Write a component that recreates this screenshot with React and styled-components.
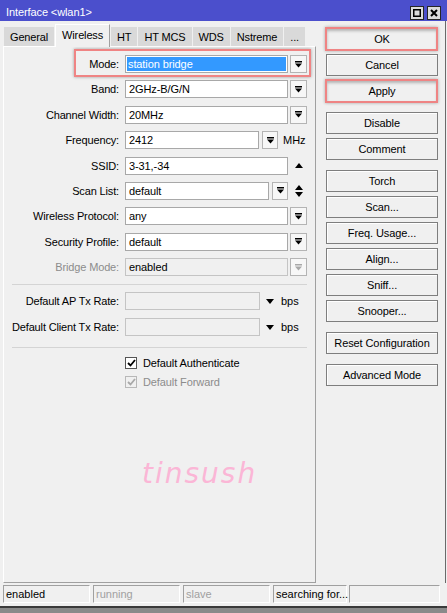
import React from 'react';
import styled, { createGlobalStyle, css } from 'styled-components';

const GlobalStyle = createGlobalStyle`
  html, body { margin: 0; padding: 0; background: #f0f0f0; }
  body {
    font-family: "Liberation Sans", Arial, sans-serif;
    font-size: 11px;
    color: #000;
  }
`;

const Window = styled.div`
  width: 447px;
  height: 613px;
  display: flex;
  flex-direction: column;
  background: #f0f0f0;
  overflow: hidden;
`;

const TitleBar = styled.div`
  height: 21px;
  flex: none;
  background: #4b4fcc;
  color: #fff;
  display: flex;
  align-items: flex-end;
  padding: 0 6px 1px 6px;
  box-sizing: border-box;
`;

const Title = styled.span`
  flex: 1;
  line-height: 13px;
  padding-bottom: 1px;
  letter-spacing: -0.1px;
`;

const TitleButtons = styled.div`
  display: flex;
  gap: 3px;
`;

const TitleButton = styled.div`
  width: 14px;
  height: 14px;
  box-sizing: border-box;
  border: 1px solid #262626;
  background: #dcdcdc;
  display: flex;
  align-items: center;
  justify-content: center;
`;

const Body = styled.div`
  flex: 1;
  display: flex;
  min-height: 0;
  border-right: 1px solid #6a6a6a;
  margin-right: 1px;
`;

const LeftCol = styled.div`
  width: 313px;
  margin-left: 3px;
  padding-top: 3px;
  display: flex;
  flex-direction: column;
`;

const TabsRow = styled.div`
  height: 22px;
  flex: none;
  display: flex;
  align-items: flex-end;
  gap: 1px;
  padding-left: 1px;
  position: relative;
  z-index: 1;
`;

const Tab = styled.div`
  height: 19px;
  padding: 0 6px;
  display: flex;
  align-items: center;
  box-sizing: border-box;
  background: #d9d9d9;
  letter-spacing: -0.15px;
  white-space: nowrap;
  ${p => p.$active && css`
    height: 23px;
    margin-bottom: -1px;
    background: #f0f0f0;
    border-top: 1px solid #fff;
    border-left: 1px solid #fff;
    border-right: 1px solid #a0a0a0;
    padding-bottom: 3px;
  `}
`;

const Panel = styled.div`
  flex: 1;
  box-sizing: border-box;
  border-top: 1px solid #fff;
  border-left: 1px solid #fff;
  border-right: 1px solid #a0a0a0;
  border-bottom: 1px solid #a0a0a0;
  padding-top: 8px;
  display: flex;
  flex-direction: column;
`;

const FieldGroup = styled.div`
  display: flex;
  flex-direction: column;
  gap: ${p => p.$gap}px;
  margin-top: ${p => p.$top || 0}px;
`;

const Row = styled.div`
  height: 18px;
  display: flex;
  align-items: center;
  position: relative;
  ${p => p.$marked && css`
    &::after {
      content: '';
      position: absolute;
      left: 70px;
      right: 4px;
      top: -6px;
      bottom: -4px;
      border: 2px solid #ef8484;
      box-shadow: 0 0 3px rgba(0, 0, 0, 0.35);
      pointer-events: none;
    }
  `}
`;

const Label = styled.div`
  width: 115px;
  flex: none;
  margin-right: 6px;
  text-align: right;
  white-space: nowrap;
  letter-spacing: -0.15px;
  color: ${p => (p.$disabled ? '#8c8c8c' : '#000')};
`;

const Field = styled.div`
  width: ${p => p.$w}px;
  height: 18px;
  flex: none;
  box-sizing: border-box;
  border: 1px solid #a8a8a8;
  background: #fff;
  padding-left: 3px;
  display: flex;
  align-items: center;
  white-space: nowrap;
  letter-spacing: -0.1px;
  ${p => p.$disabled && css`
    background: #f0f0f0;
    border-color: #c4c4c4;
  `}
  ${p => p.$selected && css`
    background: #3399ff;
    color: #fff;
    box-shadow: inset 0 0 0 1px #fff;
    padding-left: 2px;
  `}
`;

const DropButton = styled.div`
  width: ${p => p.$w || 17}px;
  height: 18px;
  flex: none;
  margin-left: ${p => p.$ml || 2}px;
  box-sizing: border-box;
  border: 1px solid #b4b4b4;
  background: #f7f7f7;
  display: flex;
  align-items: center;
  justify-content: center;
`;

const Glyph = styled.div`
  flex: none;
  margin-left: ${p => p.$ml}px;
  display: flex;
  align-items: center;
`;

const Unit = styled.span`
  margin-left: ${p => p.$ml}px;
  white-space: nowrap;
`;

const Separator = styled.div`
  height: 1px;
  flex: none;
  background: #d4d4d4;
  margin: ${p => p.$top}px 8px 0 8px;
`;

const CheckGroup = styled.div`
  display: flex;
  flex-direction: column;
  gap: 6px;
  margin-top: 8px;
  padding-left: 121px;
`;

const CheckRow = styled.label`
  display: flex;
  align-items: center;
  gap: 6px;
  height: 13px;
  color: ${p => (p.$disabled ? '#8c8c8c' : '#000')};
  letter-spacing: -0.1px;
`;

const Box = styled.span`
  width: 12px;
  height: 12px;
  box-sizing: border-box;
  border: 1px solid ${p => (p.$disabled ? '#b8b8b8' : '#555')};
  background: ${p => (p.$disabled ? '#f0f0f0' : '#fff')};
  display: flex;
  align-items: center;
  justify-content: center;
`;

const Watermark = styled.div`
  margin: 69px 0 0 138px;
  font-family: "DejaVu Sans", sans-serif;
  font-size: 28px;
  line-height: 34px;
  font-weight: 200;
  font-style: italic;
  letter-spacing: 2px;
  color: #fbb6d6;
`;

const RightCol = styled.div`
  padding: 7px 0 0 10px;
  width: 112px;
  display: flex;
  flex-direction: column;
`;

const ButtonGroup = styled.div`
  display: flex;
  flex-direction: column;
  gap: 4px;
  margin-top: ${p => p.$top || 0}px;
`;

const Button = styled.div`
  height: 22px;
  box-sizing: border-box;
  border: 1px solid #7e7e7e;
  background: #f0f0f0;
  box-shadow: inset 1px 1px 0 #fff;
  display: flex;
  align-items: center;
  justify-content: center;
  position: relative;
  letter-spacing: -0.1px;
  ${p => p.$marked && css`
    box-shadow: inset 0 2px 3px rgba(0, 0, 0, 0.25);
    &::after {
      content: '';
      position: absolute;
      inset: -2px -1px -2px -2px;
      border: 2px solid #ef8484;
      box-shadow: 0 0 3px rgba(0, 0, 0, 0.3);
      pointer-events: none;
    }
  `}
`;

const StatusBar = styled.div`
  height: 23px;
  flex: none;
  display: flex;
  gap: 3px;
  padding: 2px 0 0 3px;
  box-sizing: border-box;
`;

const Cell = styled.div`
  width: ${p => p.$w}px;
  height: 18px;
  box-sizing: border-box;
  border-top: 1px solid #a0a0a0;
  border-left: 1px solid #a0a0a0;
  border-right: 1px solid #fff;
  border-bottom: 1px solid #fff;
  padding-left: 2px;
  display: flex;
  align-items: center;
  white-space: nowrap;
  margin-right: ${p => p.$mr || 0}px;
  color: ${p => (p.$dim ? '#a0a0a0' : '#000')};
`;

const BottomFrame = styled.div`
  height: 7px;
  flex: none;
  box-sizing: border-box;
  border-top: 2px solid #3a3a3a;
  background: #8a8a8a;
`;

const DropIcon = ({ disabled }) => (
  <svg width="7" height="7" viewBox="0 0 7 7">
    <g fill={disabled ? '#a8a8a8' : '#000'}>
      <rect x="0" y="0" width="7" height="1.5" />
      <path d="M0 2.5 H7 L3.5 6.5 Z" />
    </g>
  </svg>
);

const UpIcon = () => (
  <svg width="8" height="5" viewBox="0 0 8 5">
    <path d="M0 5 L4 0 L8 5 Z" fill="#000" />
  </svg>
);

const DownIcon = () => (
  <svg width="8" height="5" viewBox="0 0 8 5">
    <path d="M0 0 L8 0 L4 5 Z" fill="#000" />
  </svg>
);

const UpDownIcon = () => (
  <svg width="8" height="12" viewBox="0 0 8 12">
    <path d="M0 5 L4 0 L8 5 Z M0 7 L8 7 L4 12 Z" fill="#000" />
  </svg>
);

const CheckMark = ({ disabled }) => (
  <svg width="9" height="8" viewBox="0 0 9 8">
    <path d="M1 4 L3.5 6.5 L8 1" stroke={disabled ? '#a8a8a8' : '#000'} strokeWidth="1.8" fill="none" />
  </svg>
);

const tabs = ['General', 'Wireless', 'HT', 'HT MCS', 'WDS', 'Nstreme', '...'];

const buttonGroups = [
  { top: 0, items: [['OK', true], ['Cancel'], ['Apply', true]] },
  { top: 10, items: [['Disable'], ['Comment']] },
  { top: 10, items: [['Torch'], ['Scan...'], ['Freq. Usage...'], ['Align...'], ['Sniff...'], ['Snooper...']] },
  { top: 10, items: [['Reset Configuration']] },
  { top: 10, items: [['Advanced Mode']] },
];

const App = () => (
  <Window>
    <GlobalStyle />
    <TitleBar>
      <Title>Interface &lt;wlan1&gt;</Title>
      <TitleButtons>
        <TitleButton>
          <svg width="8" height="8" viewBox="0 0 8 8">
            <rect x="0.75" y="0.75" width="6.5" height="6.5" fill="none" stroke="#000" strokeWidth="1.5" />
          </svg>
        </TitleButton>
        <TitleButton>
          <svg width="8" height="8" viewBox="0 0 8 8">
            <path d="M1 1 L7 7 M7 1 L1 7" stroke="#000" strokeWidth="2" />
          </svg>
        </TitleButton>
      </TitleButtons>
    </TitleBar>

    <Body>
      <LeftCol>
        <TabsRow>
          {tabs.map(t => (
            <Tab key={t} $active={t === 'Wireless'}>{t}</Tab>
          ))}
        </TabsRow>
        <Panel>
          <FieldGroup $gap={7.4}>
            <Row $marked>
              <Label>Mode:</Label>
              <Field $w={163} $selected>station bridge</Field>
              <DropButton><DropIcon /></DropButton>
            </Row>
            <Row>
              <Label>Band:</Label>
              <Field $w={163}>2GHz-B/G/N</Field>
              <DropButton><DropIcon /></DropButton>
            </Row>
            <Row>
              <Label>Channel Width:</Label>
              <Field $w={163}>20MHz</Field>
              <DropButton><DropIcon /></DropButton>
            </Row>
            <Row>
              <Label>Frequency:</Label>
              <Field $w={134}>2412</Field>
              <DropButton $ml={3} $w={16}><DropIcon /></DropButton>
              <Unit $ml={5}>MHz</Unit>
            </Row>
            <Row>
              <Label>SSID:</Label>
              <Field $w={163}>3-31,-34</Field>
              <Glyph $ml={7}><UpIcon /></Glyph>
            </Row>
            <Row>
              <Label>Scan List:</Label>
              <Field $w={144}>default</Field>
              <DropButton $ml={3} $w={16}><DropIcon /></DropButton>
              <Glyph $ml={7}><UpDownIcon /></Glyph>
            </Row>
            <Row>
              <Label>Wireless Protocol:</Label>
              <Field $w={163}>any</Field>
              <DropButton><DropIcon /></DropButton>
            </Row>
            <Row>
              <Label>Security Profile:</Label>
              <Field $w={163}>default</Field>
              <DropButton><DropIcon /></DropButton>
            </Row>
            <Row>
              <Label $disabled>Bridge Mode:</Label>
              <Field $w={163} $disabled>enabled</Field>
              <DropButton><DropIcon disabled /></DropButton>
            </Row>
          </FieldGroup>

          <Separator $top={8} />

          <FieldGroup $gap={8} $top={7}>
            <Row>
              <Label>Default AP Tx Rate:</Label>
              <Field $w={135} $disabled />
              <Glyph $ml={6}><DownIcon /></Glyph>
              <Unit $ml={7}>bps</Unit>
            </Row>
            <Row>
              <Label>Default Client Tx Rate:</Label>
              <Field $w={135} $disabled />
              <Glyph $ml={6}><DownIcon /></Glyph>
              <Unit $ml={7}>bps</Unit>
            </Row>
          </FieldGroup>

          <Separator $top={11} />

          <CheckGroup>
            <CheckRow>
              <Box><CheckMark /></Box>
              Default Authenticate
            </CheckRow>
            <CheckRow $disabled>
              <Box $disabled><CheckMark disabled /></Box>
              Default Forward
            </CheckRow>
          </CheckGroup>

          <Watermark>tinsush</Watermark>
        </Panel>
      </LeftCol>

      <RightCol>
        {buttonGroups.map((g, i) => (
          <ButtonGroup key={i} $top={g.top}>
            {g.items.map(([label, marked]) => (
              <Button key={label} $marked={marked}>{label}</Button>
            ))}
          </ButtonGroup>
        ))}
      </RightCol>
    </Body>

    <StatusBar>
      <Cell $w={87}>enabled</Cell>
      <Cell $w={87} $dim>running</Cell>
      <Cell $w={87} $dim>slave</Cell>
      <Cell $w={74} $mr={-1}>searching for...</Cell>
      <Cell $w={91} />
    </StatusBar>
    <BottomFrame />
  </Window>
);

export default App;
